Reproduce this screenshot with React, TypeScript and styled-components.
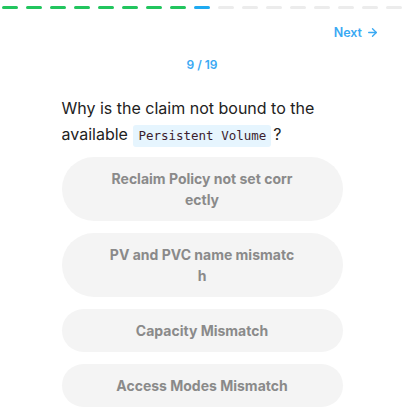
import styled, { createGlobalStyle } from "styled-components"
import { ArrowRight } from "lucide-react"

const GlobalStyle = createGlobalStyle`
    body {
        margin: 0;
        background: #fff;
        font-family: Inter, "Noto Sans", sans-serif;
    }
`

const TOTAL = 19
const CURRENT = 9

const options = [
    "Reclaim Policy not set correctly",
    "PV and PVC name mismatch",
    "Capacity Mismatch",
    "Access Modes Mismatch",
]

export default function App() {
    return (
        <>
            <GlobalStyle />
            <Page>
                <Progress>
                    {Array.from({ length: TOTAL }).map((_, i) => (
                        <Segment
                            key={i}
                            $state={i < CURRENT - 1 ? "done" : i === CURRENT - 1 ? "current" : "todo"}
                        />
                    ))}
                </Progress>
                <NavRow>
                    <NextButton>
                        Next <ArrowRight size={13} strokeWidth={2.5} />
                    </NextButton>
                </NavRow>
                <Counter>{CURRENT} / {TOTAL}</Counter>
                <Quiz>
                    <Question>
                        Why is the claim not bound to the available <Code>Persistent Volume</Code>?
                    </Question>
                    <Options>
                        {options.map((o) => (
                            <Option key={o}>{o}</Option>
                        ))}
                    </Options>
                </Quiz>
            </Page>
        </>
    )
}

const Page = styled.div`
    width: 404px;
    height: 415px;
    overflow: hidden;
`

const Progress = styled.div`
    display: flex;
    gap: 8px;
    padding: 6px 2px 0;
    overflow: hidden;
`

const Segment = styled.div<{ $state: "done" | "current" | "todo" }>`
    flex-shrink: 0;
    width: 16px;
    height: 3px;
    border-radius: 2px;
    background: ${(p) =>
        p.$state === "done" ? "#22c55e" : p.$state === "current" ? "#1eaaf1" : "#ececec"};
`

const NavRow = styled.div`
    display: flex;
    justify-content: flex-end;
    padding: 16px 25px 0 0;
`

const NextButton = styled.button`
    display: flex;
    align-items: center;
    gap: 4px;
    border: none;
    background: none;
    padding: 0;
    font-family: Inter, sans-serif;
    font-size: 12.5px;
    font-weight: 600;
    color: #3aa9f3;
    cursor: pointer;
`

const Counter = styled.div`
    margin-top: 17px;
    text-align: center;
    font-size: 12px;
    font-weight: 600;
    color: #3aa9f3;
`

const Quiz = styled.div`
    width: 281px;
    margin: 23px auto 0;
`

const Question = styled.p`
    margin: 0;
    font-size: 16px;
    line-height: 26px;
    color: #222;
`

const Code = styled.code`
    display: inline-block;
    font-family: "DejaVu Sans Mono", monospace;
    font-size: 12.5px;
    line-height: 22px;
    color: #3b1d2e;
    background: #e6f5fe;
    border-radius: 3px;
    padding: 0 5px;
    margin: 0 2px 0 1px;
`

const Options = styled.div`
    display: flex;
    flex-direction: column;
    gap: 12px;
    margin-top: 10px;
`

const Option = styled.button`
    border: none;
    border-radius: 999px;
    background: #f4f4f4;
    padding: 11px 48px;
    font-family: Inter, sans-serif;
    font-size: 14px;
    font-weight: 700;
    line-height: 21px;
    color: #8a8a8a;
    text-align: center;
    word-break: break-all;
    cursor: pointer;
`
